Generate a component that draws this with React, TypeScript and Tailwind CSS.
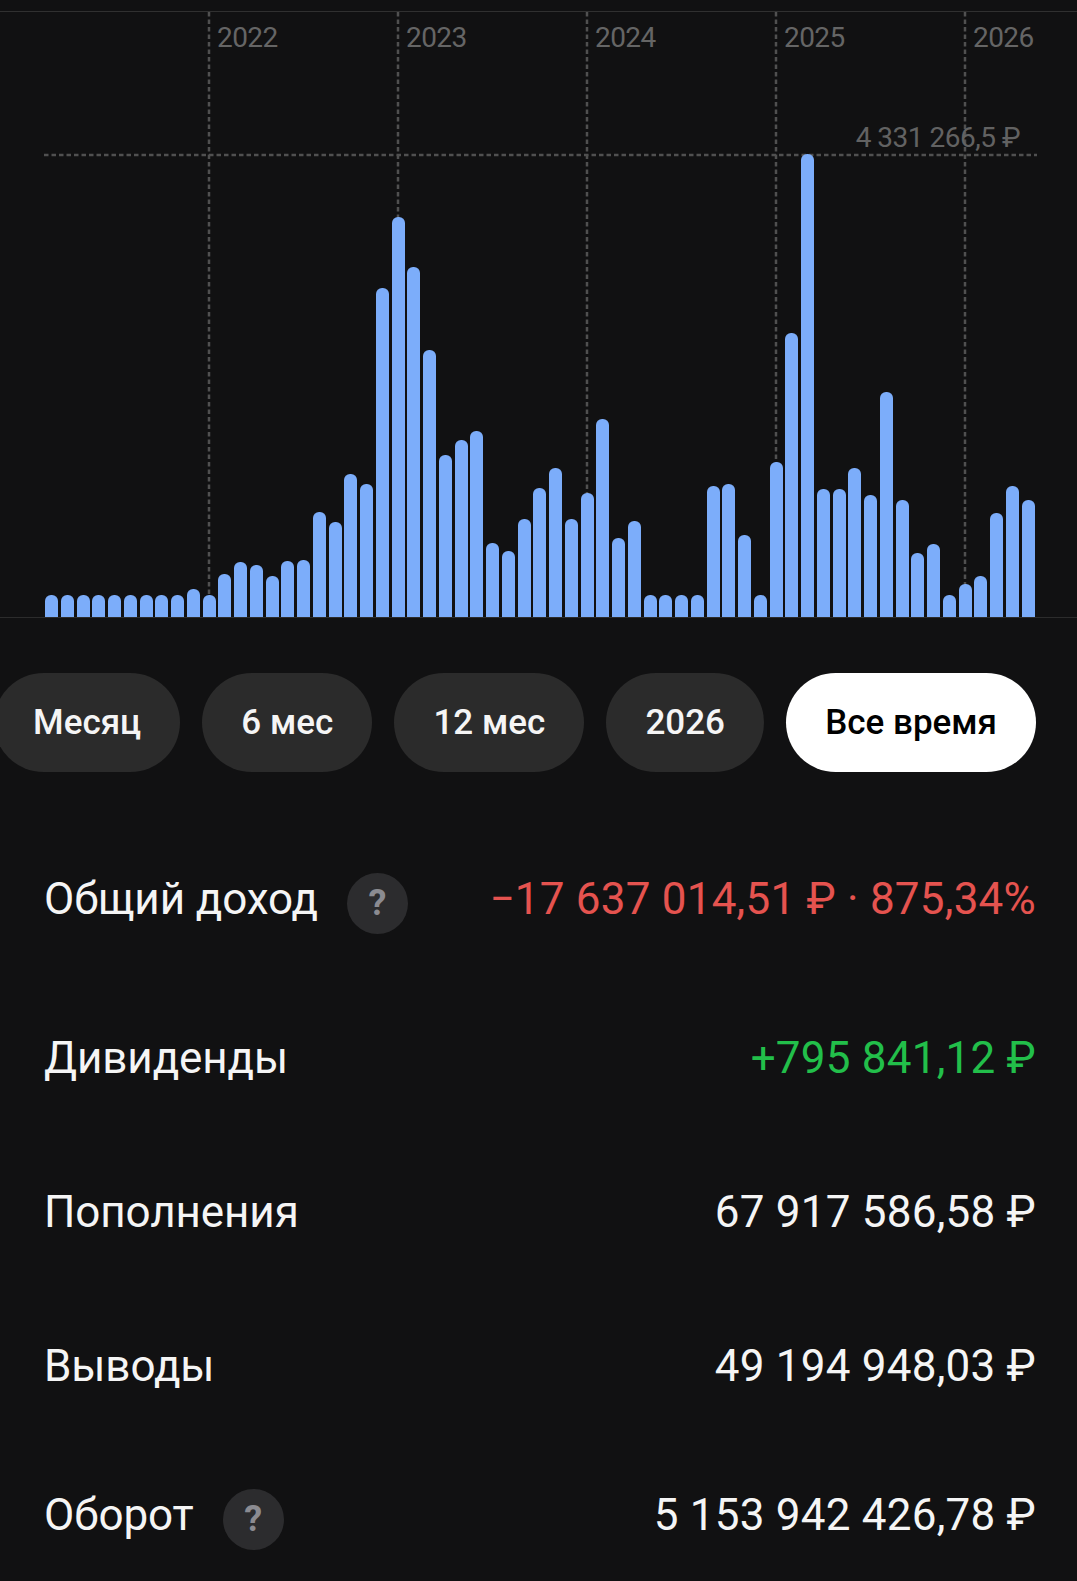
const barHeights = [
  21, 21, 21, 21, 21, 21, 21, 21, 21, 27, 21, 42, 54, 51, 40, 55, 56, 104, 94, 142, 132,
  328, 399, 349, 266, 161, 176, 185, 73, 65, 97, 128, 148, 97, 123, 197, 78, 95,
  21, 21, 21, 21, 130, 132, 81, 21, 154, 283, 462, 127, 127, 148, 121, 224, 116, 63, 72,
  21, 32, 40, 103, 130, 116,
];

const years = [
  { label: '2022', x: 209 },
  { label: '2023', x: 398 },
  { label: '2024', x: 587 },
  { label: '2025', x: 776 },
  { label: '2026', x: 965 },
];

const periods = ['Месяц', '6 мес', '12 мес', '2026', 'Все время'];

function HelpBadge() {
  return (
    <span className="ml-[29px] mt-[8px] flex h-[61px] w-[61px] items-center justify-center rounded-full bg-[#2c2c2e] text-[36px] font-bold text-[#8b8b91]">
      ?
    </span>
  );
}

function Chart() {
  return (
    <div className="relative h-[618px] border-b border-[#2c2c2c]">
      <div className="absolute inset-x-0 top-[11px] h-px bg-[#303030]" />

      {/* grid */}
      <svg className="absolute left-0 top-0" width="1077" height="617">
        <line x1="44" x2="1037" y1="155" y2="155" stroke="#505050" strokeWidth="2.5" strokeDasharray="4.5 3" />
        {years.map((y) => (
          <line key={y.label} x1={y.x} x2={y.x} y1="12" y2="616" stroke="#505050" strokeWidth="2.5" strokeDasharray="4.5 3" />
        ))}
      </svg>

      {years.map((y) => (
        <span
          key={y.label}
          className="absolute top-[20px] text-[28px] leading-[36px] tracking-[-0.55px] text-[#656565]"
          style={{ left: y.x + 8 }}
        >
          {y.label}
        </span>
      ))}
      <span className="absolute right-[57px] top-[120px] text-[28px] leading-[36px] tracking-[-0.5px] text-[#626262]">
        4 331 266,5 ₽
      </span>

      {/* bars */}
      <div className="relative flex h-full items-end gap-[2.75px] pl-[45px]">
        {barHeights.map((h, i) => (
          <div key={i} className="w-[13px] shrink-0 rounded-t-[6px] bg-[#7cadfa]" style={{ height: h + 1 }} />
        ))}
      </div>
    </div>
  );
}

export default function App() {
  return (
    <div className="h-[1581px] w-[1077px] overflow-hidden bg-[#111112] text-[#f5f5f5] [font-family:Roboto,sans-serif]">
      <Chart />

      <div className="mt-[55px] flex justify-end gap-[22.2px] pr-[41px]">
        {periods.map((p) => (
          <button
            key={p}
            className={
              p === 'Все время'
                ? 'h-[99px] shrink-0 rounded-full bg-white px-[39px] pt-[2px] text-[35px] font-medium text-black'
                : 'h-[99px] shrink-0 rounded-full bg-[#2b2b2b] px-[39px] pt-[2px] text-[35px] font-medium text-[#f5f5f5]'
            }
          >
            {p}
          </button>
        ))}
      </div>

      <div className="mt-[87px] pl-[44px] pr-[41px] text-[44px] tracking-[-0.1px]">
        <div className="flex h-[80px] items-center justify-between">
          <div className="flex items-center">
            <span>Общий доход</span>
            <HelpBadge />
          </div>
          <span className="tracking-[0.22px] text-[#e5534f]">−17 637 014,51 ₽ · 875,34%</span>
        </div>
        <div className="mt-[79px] flex h-[80px] items-center justify-between">
          <span>Дивиденды</span>
          <span className="tracking-[0.22px] text-[#22bf4a]">+795 841,12 ₽</span>
        </div>
        <div className="mt-[74px] flex h-[80px] items-center justify-between">
          <span>Пополнения</span>
          <span className="tracking-[0.22px]">67 917 586,58 ₽</span>
        </div>
        <div className="mt-[74px] flex h-[80px] items-center justify-between">
          <span>Выводы</span>
          <span className="tracking-[0.22px]">49 194 948,03 ₽</span>
        </div>
        <div className="mt-[69px] flex h-[80px] items-center justify-between">
          <div className="flex items-center">
            <span>Оборот</span>
            <HelpBadge />
          </div>
          <span className="tracking-[0.22px]">5 153 942 426,78 ₽</span>
        </div>
      </div>
    </div>
  );
}
